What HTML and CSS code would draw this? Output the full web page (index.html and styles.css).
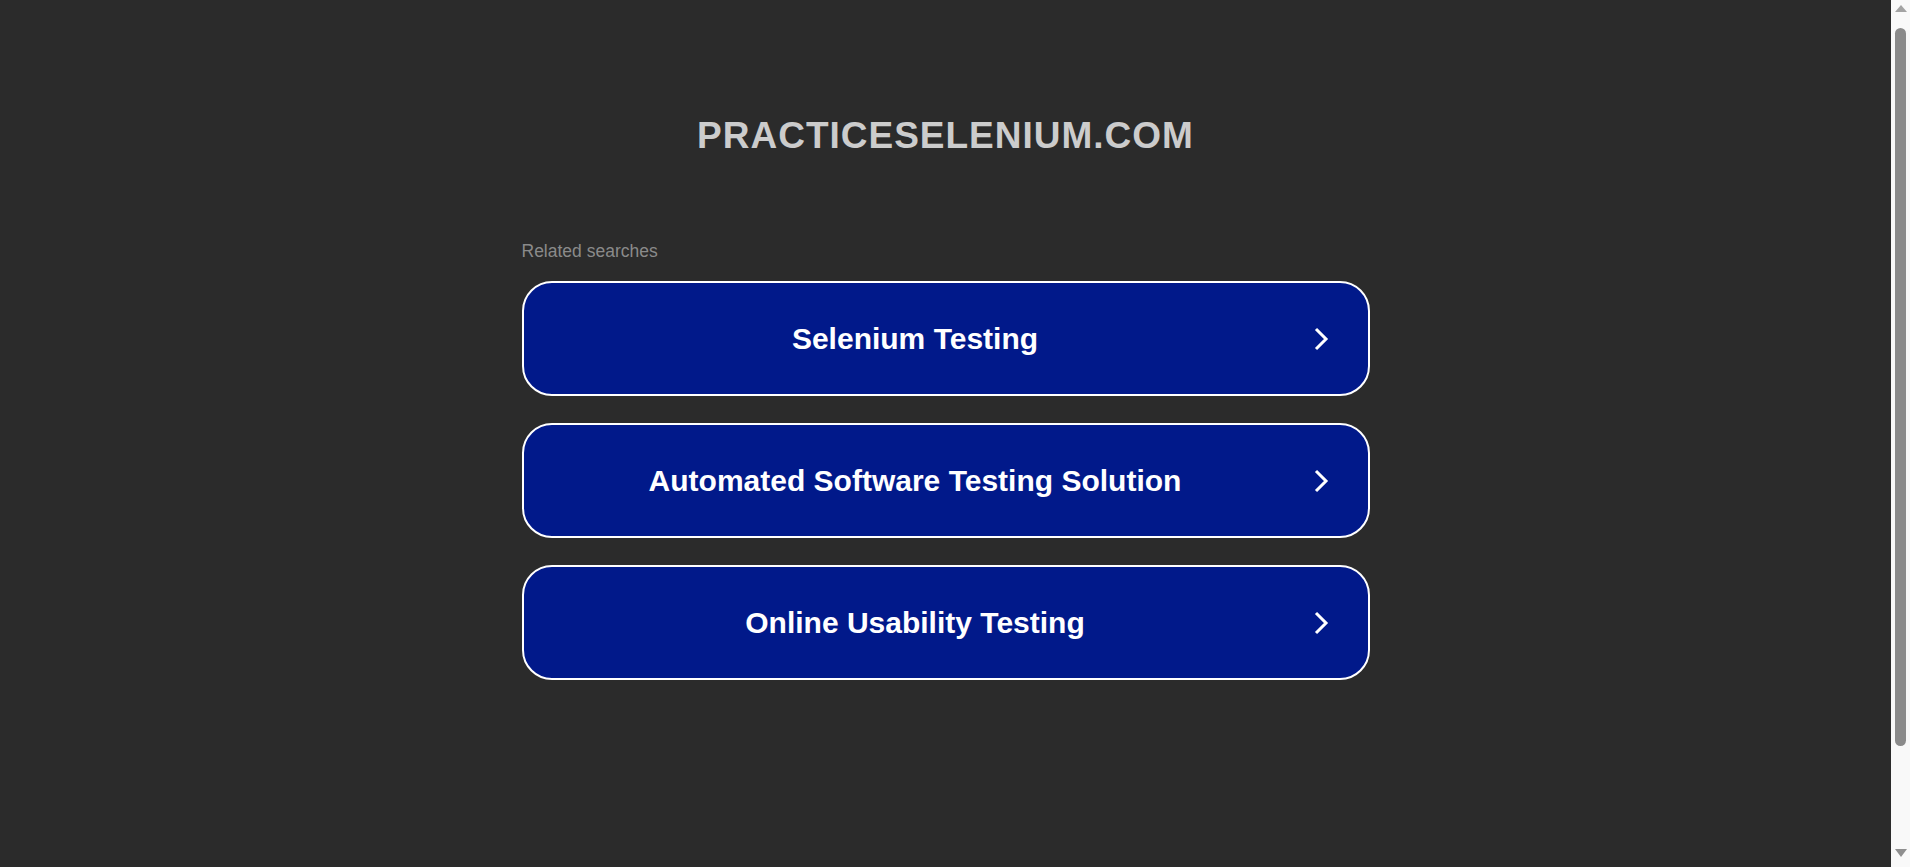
FILE: index.html
```html
<!DOCTYPE html>
<html lang="en">
<head>
<meta charset="utf-8">
<title>practiceselenium.com</title>
<link rel="stylesheet" href="styles.css">
</head>
<body>
<div class="app">
  <main class="page">
    <h1 class="domain">PRACTICESELENIUM.COM</h1>
    <div class="related">
      <p class="label">Related searches</p>
      <a class="card" href="#"><span class="card-text">Selenium Testing</span><svg class="chev" viewBox="0 0 16 26" width="16" height="26"><path d="M3 3 L13 13 L3 23" fill="none" stroke="#fff" stroke-width="3"/></svg></a>
      <a class="card" href="#"><span class="card-text">Automated Software Testing Solution</span><svg class="chev" viewBox="0 0 16 26" width="16" height="26"><path d="M3 3 L13 13 L3 23" fill="none" stroke="#fff" stroke-width="3"/></svg></a>
      <a class="card" href="#"><span class="card-text">Online Usability Testing</span><svg class="chev" viewBox="0 0 16 26" width="16" height="26"><path d="M3 3 L13 13 L3 23" fill="none" stroke="#fff" stroke-width="3"/></svg></a>
    </div>
  </main>
  <aside class="scrollbar" aria-hidden="true">
    <svg class="sb-arrow sb-up" viewBox="0 0 12 7" width="12" height="7"><polygon points="0,7 12,7 6,0" fill="#a3a3a3"/></svg>
    <div class="sb-thumb"></div>
    <svg class="sb-arrow sb-down" viewBox="0 0 12 8" width="12" height="8"><polygon points="0,0 12,0 6,8" fill="#8f8f8f"/></svg>
  </aside>
</div>
</body>
</html>
```
FILE: styles.css
```css
html, body {
  margin: 0;
  padding: 0;
  background: #2b2b2b;
}
body {
  font-family: "Liberation Sans", Arial, sans-serif;
}
.app {
  display: flex;
  height: 100vh;
  overflow: hidden;
}
.page {
  flex: 1;
  display: flex;
  flex-direction: column;
  align-items: center;
  padding-top: 115px;
}
.domain {
  margin: 0;
  font-size: 37px;
  line-height: 42px;
  font-weight: bold;
  letter-spacing: 1px;
  color: #cccccc;
}
.related {
  width: 848px;
  margin-top: 84px;
  display: flex;
  flex-direction: column;
  gap: 27px;
}
.label {
  margin: 0 0 -7px;
  font-size: 17.5px;
  line-height: 20px;
  color: #8a8a8a;
}
.card {
  box-sizing: border-box;
  height: 115px;
  border: 2px solid #ffffff;
  border-radius: 30px;
  background: #01198a;
  display: flex;
  align-items: center;
  padding: 0 39px 0 0;
  text-decoration: none;
}
.card-text {
  flex: 1;
  text-align: center;
  color: #ffffff;
  font-weight: bold;
  font-size: 30px;
  padding-right: 6px;
}
.chev {
  flex: none;
  display: block;
}
.scrollbar {
  flex: none;
  width: 19px;
  background: #f9f9f9;
  display: flex;
  flex-direction: column;
  align-items: center;
}
.sb-arrow {
  display: block;
  flex: none;
}
.sb-up {
  margin-top: 5px;
}
.sb-thumb {
  flex: none;
  width: 11px;
  height: 718px;
  margin-top: 16px;
  border-radius: 6px;
  background: #8b8b8b;
}
.sb-down {
  margin-top: auto;
  margin-bottom: 10px;
}
```
